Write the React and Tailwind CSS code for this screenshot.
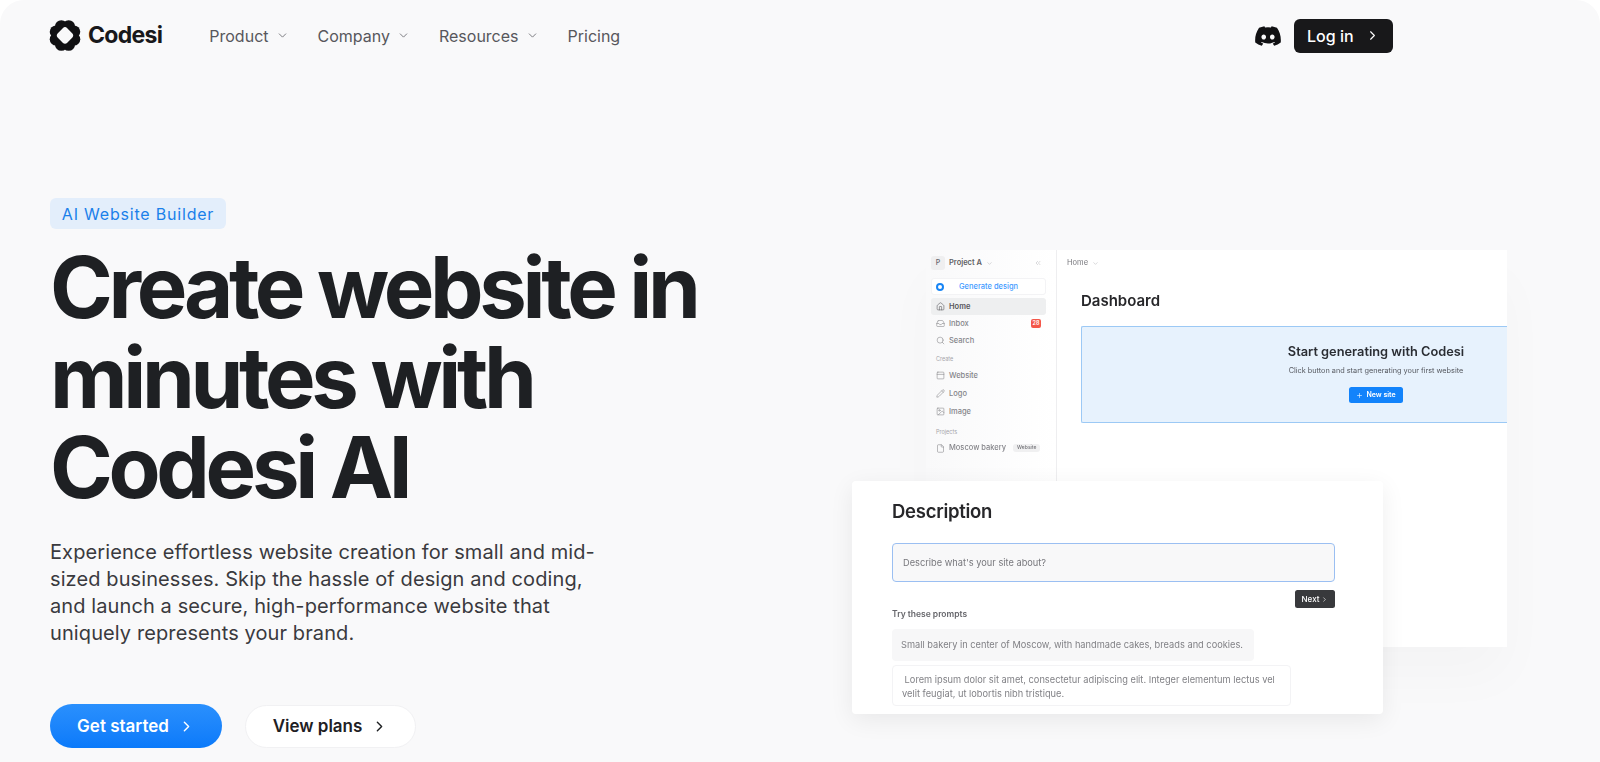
import React from "react";
import { ChevronDown, ChevronRight, Home, Inbox, Search, PanelTop, Pencil, ImageIcon, File, ChevronsLeft, Plus } from "lucide-react";
import { FaDiscord } from "react-icons/fa";

function Logo() {
  const lobes = [];
  for (let i = 0; i < 8; i++) {
    const a = (i * Math.PI) / 4 + Math.PI / 8;
    lobes.push(<circle key={i} cx={16 + 9.6 * Math.cos(a)} cy={16 + 9.6 * Math.sin(a)} r="6.4" fill="#111113" />);
  }
  return (
    <svg width="32" height="33" viewBox="0 0 32 32" className="shrink-0">
      {lobes}
      <circle cx="16" cy="16" r="12.5" fill="#111113" />
      <path d="M16 7.600c.8 0 1.400.4 2 1l5.400 5.400c1.100 1.100 1.100 2.900 0 4l-5.400 5.400c-1.100 1.100-2.900 1.100-4 0L8.600 18c-1.100-1.100-1.100-2.900 0-4L14 8.600c.6-.6 1.200-1 2-1z" fill="#f9f9fa" />
    </svg>
  );
}

function NavItem({ label, chevron = true }) {
  return (
    <div className="flex items-center gap-[7px] text-[16px] text-[#57575c]">
      <span>{label}</span>
      {chevron && <ChevronDown size={13} strokeWidth={1.6} className="text-[#6b6b70]" />}
    </div>
  );
}

function SideItem({ icon: Icon, label, active, extra }) {
  return (
    <div className={`flex items-center h-[17px] rounded-[3px] pl-[5px] pr-[5px] gap-[4px] ml-[5px] mr-[10px] text-[7.500px] ${active ? "bg-[#eeeff0] text-[#56565b] font-semibold" : "text-[#85858a] font-medium"}`}>
      <Icon size={9} strokeWidth={1.5} className="shrink-0" />
      <span>{label}</span>
      {extra}
    </div>
  );
}

function Mockup() {
  return (
    <div className="relative w-[660px] h-[480px] shrink-0 mr-[93px] mt-[179px] blur-[0.35px]">
      <div className="absolute left-[79px] top-0 w-[581px] h-[397px] flex bg-white shadow-[0_30px_50px_rgba(0,0,0,0.025)]">
        <div className="w-[131px] h-full shrink-0 bg-gradient-to-r from-[#f9f9fa] to-white border-r border-[#eeeef0] flex flex-col">
          <div className="flex items-center h-[24px] mt-[1px] px-[5px] gap-[4px] text-[7.500px] font-semibold text-[#5f5f64]">
            <div className="w-[14px] h-[14px] rounded-[3px] bg-[#efeff0] flex items-center justify-center text-[7px] font-medium text-[#66666b]">P</div>
            <span>Project A</span>
            <ChevronDown size={7} strokeWidth={1.5} className="text-[#aaaaae]" />
            <ChevronsLeft size={8} strokeWidth={1.5} className="ml-auto mr-[9px] text-[#b5b5b9]" />
          </div>
          <div className="ml-[5px] mr-[10px] mt-[3px] h-[17px] bg-white rounded-[3px] border border-[#f3f3f5] flex items-center text-[7.500px] font-medium text-[#3f9aff] pl-[4px]">
            <div className="w-[8px] h-[8px] rounded-full border-[2.500px] border-[#1885f5] shrink-0" />
            <span className="ml-[15px]">Generate design</span>
          </div>
          <div className="flex flex-col mt-[3px]">
            <SideItem icon={Home} label="Home" active />
            <SideItem icon={Inbox} label="Inbox" extra={<span className="ml-auto w-[10px] h-[9px] rounded-[2px] bg-[#f4574a] text-white text-[5.500px] font-semibold flex items-center justify-center">28</span>} />
            <SideItem icon={Search} label="Search" />
          </div>
          <div className="text-[5.500px] text-[#a5a5aa] px-[10px] mt-[6px] mb-[4px]">Create</div>
          <div className="flex flex-col gap-[1px]">
            <SideItem icon={PanelTop} label="Website" />
            <SideItem icon={Pencil} label="Logo" />
            <SideItem icon={ImageIcon} label="Image" />
          </div>
          <div className="text-[5.500px] text-[#a5a5aa] px-[10px] mt-[8px] mb-[3px]">Projects</div>
          <SideItem icon={File} label="Moscow bakery" extra={<span className="ml-[3px] px-[4px] h-[8px] rounded-[3px] bg-[#f0f0f1] text-[5px] text-[#77777c] font-medium flex items-center">Website</span>} />
        </div>
        <div className="flex-1 min-w-0 flex flex-col">
          <div className="flex items-center gap-[4px] h-[24px] px-[10px] mt-[1px] text-[7.500px] text-[#77777c]">
            <span>Home</span>
            <ChevronDown size={7} strokeWidth={1.5} className="text-[#aaaaae]" />
          </div>
          <div className="ml-[24px] mt-[15px] text-[15px] leading-[22px] font-semibold text-[#27272a]">Dashboard</div>
          <div className="ml-[24px] mt-[14px] h-[97px] border border-[#9cc9f5] border-r-0 rounded-l-[2px] bg-[#e7f2fd] flex flex-col items-center pl-[163px]">
            <div className="mt-[16px] text-[12.800px] leading-[18px] font-semibold text-[#2a2d33] whitespace-nowrap">Start generating with Codesi</div>
            <div className="mt-[5px] text-[7.300px] leading-[10px] text-[#55585f] whitespace-nowrap">Click button and start generating your first website</div>
            <div className="mt-[11px] h-[16px] w-[54px] rounded-[2.500px] bg-[#1283fb] text-white text-[7px] font-semibold flex items-center justify-center gap-[3px]">
              <Plus size={7} strokeWidth={2} />
              <span>New site</span>
            </div>
          </div>
        </div>
      </div>
      <div className="absolute left-[5px] top-[231px] w-[531px] h-[233px] bg-white rounded-[4px] shadow-[0_6px_24px_rgba(0,0,0,0.07)] pl-[40px] pr-[48px] flex flex-col">
        <div className="mt-[17px] text-[18.500px] leading-[26px] font-semibold tracking-[-0.015em] text-[#27272a]">Description</div>
        <div className="mt-[19px] h-[39px] rounded-[4px] border-[1.500px] border-[#9bbff2] bg-[#f8f8f9] flex items-center pl-[10px] text-[9.250px] text-[#77777c]">Describe what's your site about?</div>
        <div className="mt-[8px] self-end h-[18px] w-[40px] rounded-[2.500px] bg-[#38393c] text-white text-[8px] font-medium flex items-center justify-center gap-[2px]">
          <span>Next</span>
          <ChevronRight size={7} strokeWidth={2} />
        </div>
        <div className="mt-[0px] text-[8.500px] leading-[12px] font-semibold text-[#66666b]">Try these prompts</div>
        <div className="mt-[9px] w-[362px] h-[32px] rounded-[4px] bg-[#f7f7f8] flex items-center pl-[9px] text-[9.250px] text-[#808085] whitespace-nowrap">Small bakery in center of Moscow, with handmade cakes, breads and cookies.</div>
        <div className="mt-[4px] w-[399px] h-[41px] rounded-[4px] border border-[#f3f3f5] pl-[9px] pt-[7px] text-[9.250px] leading-[13.500px] text-[#808085] whitespace-nowrap">
          <div>&nbsp;Lorem ipsum dolor sit amet, consectetur adipiscing elit. Integer elementum lectus vel</div>
          <div>velit feugiat, ut lobortis nibh tristique.</div>
        </div>
      </div>
    </div>
  );
}

export default function App() {
  return (
    <div className="w-full h-[762px] bg-white overflow-hidden font-['Inter',sans-serif]">
      <div className="h-full rounded-t-[24px] bg-[#f9f9fa] flex flex-col">
        <header className="flex items-center h-[71px] pl-[49px] pr-[207px] shrink-0">
          <div className="flex items-center gap-[7px]">
            <Logo />
            <span className="text-[23px] font-bold tracking-[-0.03em] text-[#18181b]">Codesi</span>
          </div>
          <nav className="flex items-center gap-[29px] ml-[47px]">
            <NavItem label="Product" />
            <NavItem label="Company" />
            <NavItem label="Resources" />
            <NavItem label="Pricing" chevron={false} />
          </nav>
          <div className="ml-auto flex items-center gap-[12px]">
            <FaDiscord size={28} className="text-[#111113]" />
            <div className="h-[34px] w-[99px] rounded-[6px] bg-[#18181a] text-white text-[16px] font-medium flex items-center pl-[13px] gap-[11px]">
              <span>Log in</span>
              <ChevronRight size={15} strokeWidth={1.8} />
            </div>
          </div>
        </header>
        <main className="flex-1 flex justify-between pl-[50px] min-h-0">
          <div className="flex flex-col items-start pt-[127px]">
            <div className="h-[31px] w-[176px] rounded-[6px] bg-[#e3eefb] flex items-center justify-center text-[16px] tracking-[0.05em] text-[#1a80ea]">AI Website Builder</div>
            <h1 className="mt-[14px] text-[85px] leading-[90px] font-bold tracking-[-0.051em] text-[#1e2023] whitespace-nowrap">
              Create website in<br />minutes with<br />Codesi AI
            </h1>
            <p className="mt-[26px] text-[20px] leading-[27px] tracking-[0.005em] text-[#3a3a3e] whitespace-nowrap">
              Experience effortless website creation for small and mid-<br />
              sized businesses. Skip the hassle of design and coding,<br />
              and launch a secure, high-performance website that<br />
              uniquely represents your brand.
            </p>
            <div className="flex items-center gap-[23px] mt-[57px]">
              <div className="h-[44px] w-[172px] rounded-full bg-gradient-to-b from-[#2a90fd] to-[#0a7afa] text-white text-[17px] font-semibold flex items-center justify-center gap-[9px] pt-[1px]">
                <span>Get started</span>
                <ChevronRight size={17} strokeWidth={2} />
              </div>
              <div className="h-[43px] w-[171px] rounded-full bg-white border border-[#f1f1f3] text-[#1e2023] text-[17px] font-semibold flex items-center justify-center gap-[9px] pt-[1px]">
                <span>View plans</span>
                <ChevronRight size={17} strokeWidth={2} />
              </div>
            </div>
          </div>
          <Mockup />
        </main>
      </div>
    </div>
  );
}
